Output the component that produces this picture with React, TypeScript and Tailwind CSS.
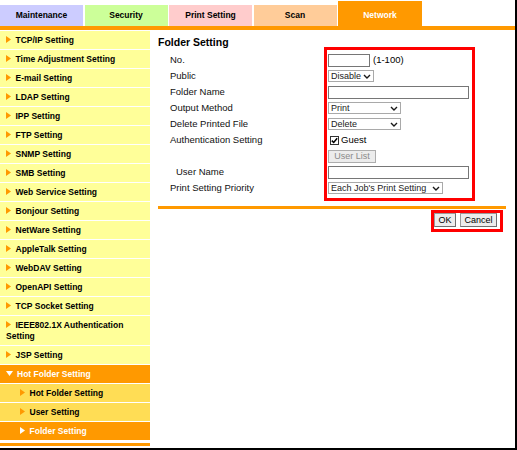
import React from 'react';

const tabs = [
  { label: 'Maintenance', bg: 'bg-[#ccccff]' },
  { label: 'Security', bg: 'bg-[#ccff99]' },
  { label: 'Print Setting', bg: 'bg-[#ffcccc]' },
  { label: 'Scan', bg: 'bg-[#ffcc99]' },
];

const menu = [
  'TCP/IP Setting',
  'Time Adjustment Setting',
  'E-mail Setting',
  'LDAP Setting',
  'IPP Setting',
  'FTP Setting',
  'SNMP Setting',
  'SMB Setting',
  'Web Service Setting',
  'Bonjour Setting',
  'NetWare Setting',
  'AppleTalk Setting',
  'WebDAV Setting',
  'OpenAPI Setting',
  'TCP Socket Setting',
  'IEEE802.1X Authentication Setting',
  'JSP Setting',
];

function Arrow({ color, down }: { color: string; down?: boolean }) {
  if (down) {
    return (
      <svg width="7" height="5" viewBox="0 0 7 5" className="inline-block align-middle mr-[4px] relative top-[-1px]">
        <polygon points="0,0 7,0 3.5,5" fill={color} />
      </svg>
    );
  }
  return (
    <svg width="5" height="7" viewBox="0 0 5 7" className="inline-block align-middle mr-[4.5px] relative top-[-1px]">
      <polygon points="0,0 5,3.5 0,7" fill={color} />
    </svg>
  );
}

function Chevron() {
  return (
    <svg width="8" height="5" viewBox="0 0 8 5">
      <path d="M1 1 L4 4 L7 1" stroke="#1a1a1a" strokeWidth="1.4" fill="none" />
    </svg>
  );
}

function Select({ value, width }: { value: string; width: string }) {
  return (
    <div className={`flex items-center justify-between h-[12px] border border-[#a9a9a9] bg-white pl-[2px] pr-[2px] text-[9px] leading-[10px] text-[#222] ${width}`}>
      <span>{value}</span>
      <Chevron />
    </div>
  );
}

export default function App() {
  const labels = [
    'No.',
    'Public',
    'Folder Name',
    'Output Method',
    'Delete Printed File',
    'Authentication Setting',
    '',
    'User Name',
    'Print Setting Priority',
  ];

  return (
    <div className="w-[517px] h-[450px] bg-white border-r-2 border-b-2 border-black font-['Liberation_Sans',Arial,sans-serif] text-black overflow-hidden">
      {/* tab bar */}
      <div className="flex items-end h-[26px]">
        {tabs.map((t) => (
          <div key={t.label} className={`w-[83px] mr-[1.5px] h-[21px] ${t.bg} text-center text-[8.5px] font-bold leading-[21px]`}>
            {t.label}
          </div>
        ))}
        <div className="w-[84px] h-[25px] bg-[#ff9900] text-white text-center text-[8.5px] font-bold flex items-end justify-center">
          <span className="leading-[21px]">Network</span>
        </div>
      </div>
      <div className="h-[4px] bg-[#ff9900]" />

      <div className="flex">
        {/* sidebar */}
        <div className="w-[150px] shrink-0 text-[8.5px] font-bold leading-[11px]">
          {menu.map((m) => (
            <div key={m} className="border-t border-white bg-[#ffff99] pl-[6px] pr-[2px] py-[3.5px]">
              <Arrow color="#ff9900" />
              {m}
            </div>
          ))}
          <div className="border-t border-white bg-[#ff9900] text-white pl-[6px] py-[3.5px]">
            <Arrow color="#ffffff" down />
            Hot Folder Setting
          </div>
          <div className="border-t border-white bg-[#ffdd55] pl-[20px] py-[3.5px]">
            <Arrow color="#ff9900" />
            Hot Folder Setting
          </div>
          <div className="border-t border-white bg-[#ffdd55] pl-[20px] py-[3.5px]">
            <Arrow color="#ff9900" />
            User Setting
          </div>
          <div className="border-t border-white bg-[#ff9900] text-white pl-[20px] py-[3.5px]">
            <Arrow color="#ffffff" />
            Folder Setting
          </div>
          <div className="mt-[3px] h-[3px] bg-[#ff9900]" />
        </div>

        {/* main */}
        <div className="flex-1 pl-[8px] pr-[9px] pt-[7px]">
          <div className="h-[10px] leading-[10px] text-[10.5px] font-bold">Folder Setting</div>

          <div className="flex">
            <div className="w-[166px] pl-[12px] pt-[5px] text-[9.5px] text-[#111]">
              {labels.map((l, i) => (
                <div key={i} className={`h-[16px] leading-[16px] ${l === 'User Name' ? 'pl-[6px]' : ''}`}>
                  {l}
                </div>
              ))}
            </div>

            <div className="w-[151px] border-[3px] border-[#ff0000] py-[2px] pl-[1px]">
              <div className="h-[16px] flex items-center">
                <input className="w-[42px] h-[13px] border border-[#767676] p-0 bg-white" />
                <span className="ml-[3px] text-[9.5px]">(1-100)</span>
              </div>
              <div className="h-[16px] flex items-center">
                <Select value="Disable" width="w-[46px]" />
              </div>
              <div className="h-[16px] flex items-center">
                <input className="w-[141px] h-[13px] border border-[#767676] p-0 bg-white" />
              </div>
              <div className="h-[16px] flex items-center">
                <Select value="Print" width="w-[73px]" />
              </div>
              <div className="h-[16px] flex items-center">
                <Select value="Delete" width="w-[73px]" />
              </div>
              <div className="h-[16px] flex items-center pl-[2px]">
                <span className="w-[9px] h-[9px] border border-[#333] bg-white flex items-center justify-center">
                  <svg width="7" height="7" viewBox="0 0 7 7">
                    <path d="M0.8 3.6 L2.7 5.5 L6.2 1.2" stroke="#000" strokeWidth="1.5" fill="none" />
                  </svg>
                </span>
                <span className="ml-[2px] text-[9.5px]">Guest</span>
              </div>
              <div className="h-[16px] flex items-center">
                <div className="w-[48px] h-[13px] border border-[#adadad] bg-[#ececec] text-[#8a8a8a] text-[9px] leading-[11px] text-center">
                  User List
                </div>
              </div>
              <div className="h-[16px] flex items-center">
                <input className="w-[141px] h-[13px] border border-[#767676] p-0 bg-white" />
              </div>
              <div className="h-[16px] flex items-center">
                <Select value="Each Job's Print Setting" width="w-[115px]" />
              </div>
            </div>
          </div>

          <div className="mt-[5px] h-[3px] bg-[#ff9900]" />

          <div className="flex justify-end mt-[1px]">
            <div className="mr-[3px] border-[3px] border-[#ff0000] flex gap-[4px] pr-[3px] pb-[2px]">
              <div className="w-[22px] h-[14px] border border-[#9a9a9a] border-r-[#6e6e6e] border-b-[#6e6e6e] bg-[#ececec] text-[9px] leading-[12px] text-center">
                OK
              </div>
              <div className="w-[37px] h-[14px] border border-[#9a9a9a] border-r-[#6e6e6e] border-b-[#6e6e6e] bg-[#ececec] text-[9px] leading-[12px] text-center">
                Cancel
              </div>
            </div>
          </div>
        </div>
      </div>
    </div>
  );
}
